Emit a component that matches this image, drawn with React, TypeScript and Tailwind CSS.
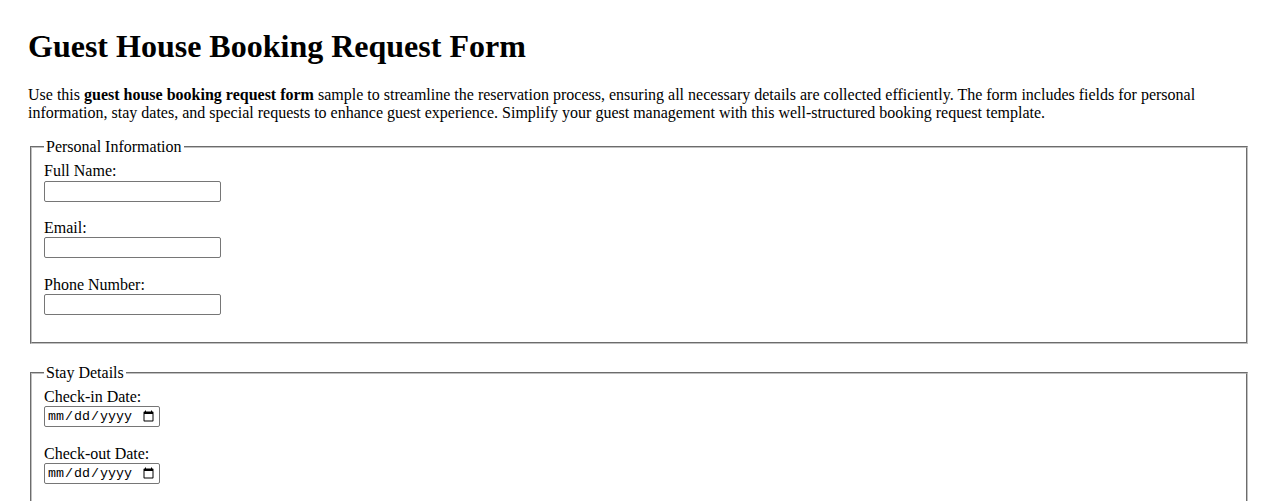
import React from "react";

function Field({ label, type = "text" }: any) {
  return (
    <div className="mb-[17.5px]">
      <label className="block leading-[18.4px]">{label}</label>
      {type === "date" ? (
        <input
          type="date"
          className="block h-[21px] w-[116px] rounded-[2px] border border-[#767676] bg-white px-[2px] font-['Liberation_Mono',monospace] text-[13.33px] text-black"
        />
      ) : (
        <input
          type={type}
          className="block h-[21px] w-[177px] rounded-[2px] border border-[#767676] bg-white px-[2px] font-['Liberation_Sans',Arial,sans-serif] text-[13.33px]"
        />
      )}
    </div>
  );
}

function Group({ legend, children }: any) {
  return (
    <fieldset className="mx-[2px] mb-5 border-2 border-[#c0c0c0] [border-style:groove] px-3 pt-[5.6px] pb-[9px]">
      <legend className="px-[2px] leading-[18.4px]">{legend}</legend>
      {children}
    </fieldset>
  );
}

export default function App() {
  return (
    <div className="min-h-screen bg-white px-[28px] pt-[28px] font-['Liberation_Serif','Times_New_Roman',serif] text-[16px] text-black">
      <h1 className="mb-[21px] text-[32px] font-bold leading-[36.8px]">
        Guest House Booking Request Form
      </h1>
      <p className="mb-[15.5px] leading-[18.4px]">
        Use this <strong>guest house booking request form</strong> sample to
        streamline the reservation process, ensuring all necessary details are
        collected efficiently. The form includes fields for personal
        information, stay dates, and special requests to enhance guest
        experience. Simplify your guest management with this well-structured
        booking request template.
      </p>
      <form>
        <Group legend="Personal Information">
          <Field label="Full Name:" />
          <Field label="Email:" type="email" />
          <Field label="Phone Number:" type="tel" />
        </Group>
        <Group legend="Stay Details">
          <Field label="Check-in Date:" type="date" />
          <Field label="Check-out Date:" type="date" />
          <Field label="Number of Guests:" type="number" />
        </Group>
      </form>
    </div>
  );
}
